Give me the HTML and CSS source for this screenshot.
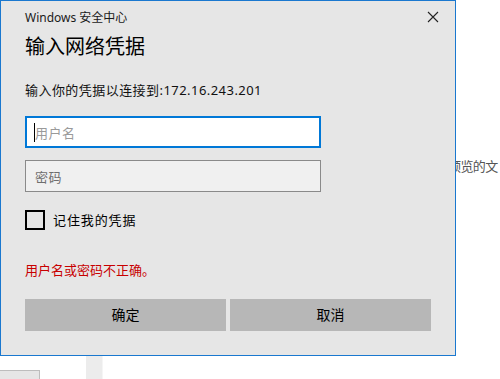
FILE: index.html
```html
<!DOCTYPE html>
<html lang="zh-CN">
<head>
    <meta charset="UTF-8">
    <meta name="viewport" content="width=device-width, initial-scale=1.0">
    <title>Windows 安全中心</title>
    <link rel="stylesheet" href="styles.css">
</head>
<body>
<div id="page">
    <p class="preview">预览的文</p>
    <div class="bottom">
        <div class="tab"></div>
        <div class="side"></div>
    </div>
</div>
<div class="dialog">
    <div class="titlebar">
        <span>Windows 安全中心</span>
        <svg class="close" width="12" height="12" viewBox="0 0 12 12">
            <path d="M1 1L11 11M11 1L1 11" stroke="#222" stroke-width="1.1" fill="none"/>
        </svg>
    </div>
    <h1 class="heading">输入网络凭据</h1>
    <p class="prompt">输入你的凭据以连接到:172.16.243.201</p>
    <div class="field focus"><i class="caret"></i><span class="hint">用户名</span></div>
    <div class="field pass"><span class="hint">密码</span></div>
    <label class="remember"><span class="box"></span>记住我的凭据</label>
    <p class="error">用户名或密码不正确。</p>
    <div class="buttons">
        <a class="btn">确定</a><a class="btn">取消</a>
    </div>
</div>
</body>
</html>
```

FILE: styles.css
```css
body {
    margin: 0;
    background: #fff;
    font-family: "Noto Sans", "Noto Sans CJK SC", sans-serif;
    overflow: hidden;
}
#page {
    position: relative;
    height: 379px;
}
.preview {
    margin: 0;
    padding: 157px 0 0 448px;
    font-size: 13px;
    line-height: 18px;
    letter-spacing: -.6px;
    color: #555;
    white-space: nowrap;
}
.bottom {
    display: flex;
    margin-top: 181px;
}
.tab {
    width: 39px;
    height: 20px;
    margin-top: 14px;
    background: #e6e6e6;
    border: 1px solid #bdbdbd;
    border-left: 0;
}
.side {
    width: 16px;
    height: 40px;
    margin-left: 46px;
    background: #ececec;
    border-right: 1px solid #f5f5f5;
}
.dialog {
    position: absolute;
    left: 0;
    top: 0;
    box-sizing: border-box;
    width: 456px;
    height: 356px;
    padding: 0 24px;
    background: #e6e6e6;
    border: 1px solid #1a78cf;
    color: #000;
}
.titlebar {
    display: flex;
    align-items: center;
    justify-content: space-between;
    height: 32px;
    font-size: 12px;
    color: #1a1a1a;
}
.close {
    margin-right: -8px;
}
.heading {
    margin: 0;
    font-size: 20px;
    font-weight: normal;
    line-height: 28px;
}
.prompt {
    margin: 19px 0 0;
    font-size: 13px;
    line-height: 20px;
    letter-spacing: .45px;
    color: #111;
}
.field {
    display: flex;
    align-items: center;
    box-sizing: border-box;
    height: 32px;
    width: 296px;
    padding-left: 9px;
    border: 1px solid #8a8a8a;
    background: #f0f0f0;
    font-size: 13px;
}
.field.focus {
    margin-top: 16px;
    padding-left: 7px;
    border: 2px solid #0078d7;
    background: #fff;
}
.field.pass {
    margin-top: 12px;
}
.caret {
    width: 1px;
    height: 19px;
    background: #000;
}
.hint {
    color: #9a9a9a;
    letter-spacing: .5px;
}
.pass .hint {
    color: #6e6e6e;
}
.remember {
    display: flex;
    align-items: center;
    gap: 8px;
    margin-top: 18px;
    font-size: 13px;
    letter-spacing: .9px;
    line-height: 20px;
}
.box {
    box-sizing: border-box;
    width: 20px;
    height: 20px;
    border: 2px solid #000;
}
.error {
    margin: 30px 0 0;
    font-size: 13px;
    line-height: 20px;
    color: #c80000;
}
.buttons {
    display: flex;
    gap: 4px;
    margin-top: 19px;
}
.btn {
    flex: 1;
    height: 32px;
    line-height: 32px;
    text-align: center;
    background: #b7b7b7;
    font-size: 14px;
    color: #000;
}
```
